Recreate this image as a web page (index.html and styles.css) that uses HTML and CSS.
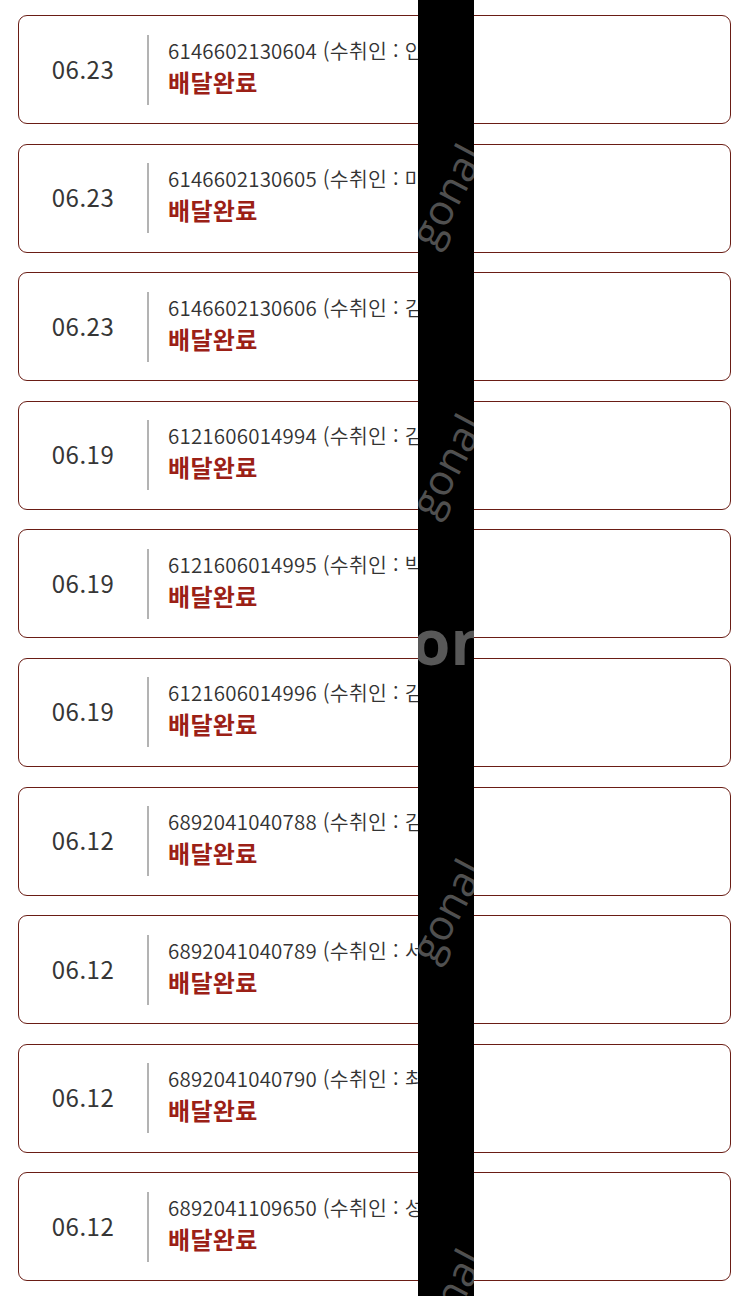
FILE: index.html
```html
<!DOCTYPE html>
<html lang="ko">
<head>
<meta charset="utf-8">
<link rel="stylesheet" href="styles.css">
</head>
<body>
<div class="list">
  <div class="card"><div class="date">06.23</div><div class="sep"></div><div class="info"><div class="track">6146602130604 (수취인 : 안</div><div class="status">배달완료</div></div></div>
  <div class="card"><div class="date">06.23</div><div class="sep"></div><div class="info"><div class="track">6146602130605 (수취인 : 마</div><div class="status">배달완료</div></div></div>
  <div class="card"><div class="date">06.23</div><div class="sep"></div><div class="info"><div class="track">6146602130606 (수취인 : 김</div><div class="status">배달완료</div></div></div>
  <div class="card"><div class="date">06.19</div><div class="sep"></div><div class="info"><div class="track">6121606014994 (수취인 : 김</div><div class="status">배달완료</div></div></div>
  <div class="card"><div class="date">06.19</div><div class="sep"></div><div class="info"><div class="track">6121606014995 (수취인 : 박</div><div class="status">배달완료</div></div></div>
  <div class="card"><div class="date">06.19</div><div class="sep"></div><div class="info"><div class="track">6121606014996 (수취인 : 김</div><div class="status">배달완료</div></div></div>
  <div class="card"><div class="date">06.12</div><div class="sep"></div><div class="info"><div class="track">6892041040788 (수취인 : 김</div><div class="status">배달완료</div></div></div>
  <div class="card"><div class="date">06.12</div><div class="sep"></div><div class="info"><div class="track">6892041040789 (수취인 : 서</div><div class="status">배달완료</div></div></div>
  <div class="card"><div class="date">06.12</div><div class="sep"></div><div class="info"><div class="track">6892041040790 (수취인 : 최</div><div class="status">배달완료</div></div></div>
  <div class="card"><div class="date">06.12</div><div class="sep"></div><div class="info"><div class="track">6892041109650 (수취인 : 성</div><div class="status">배달완료</div></div></div>
</div>
<div class="redact">
  <span class="wm wm1">gonal</span>
  <span class="wm wm2">gonal</span>
  <span class="wm wm3">gonal</span>
  <span class="wm wm4">gonal</span>
  <span class="wm-h">on</span>
</div>
</body>
</html>
```

FILE: styles.css
```css
html, body {
  margin: 0;
  padding: 0;
  background: #ffffff;
}
body {
  width: 750px;
  height: 1296px;
  overflow: hidden;
  position: relative;
  font-family: "Noto Sans CJK KR", "Noto Sans", sans-serif;
}
.list {
  padding: 15px 0 0 18px;
  display: flex;
  flex-direction: column;
  gap: 19.6px;
}
.card {
  box-sizing: border-box;
  width: 713px;
  height: 109px;
  border: 1.5px solid #6a1d15;
  border-radius: 9px;
  display: flex;
  align-items: center;
}
.date {
  width: 128px;
  text-align: center;
  font-size: 24px;
  color: #363636;
  letter-spacing: 0.5px;
  margin-top: -3px;
}
.sep {
  width: 2px;
  height: 70px;
  background: #b3b3b3;
}
.info {
  padding-left: 19px;
  display: flex;
  flex-direction: column;
  white-space: nowrap;
  margin-top: -4px;
}
.track {
  font-size: 20.5px;
  font-weight: 350;
  line-height: 28px;
  color: #333333;
  letter-spacing: 0.2px;
}
.status {
  font-size: 24px;
  line-height: 36px;
  font-weight: 700;
  color: #9b2016;
  letter-spacing: 0.3px;
}
.redact {
  position: absolute;
  left: 418px;
  top: 0;
  width: 56px;
  height: 1296px;
  background: #000000;
  overflow: hidden;
}
.wm {
  position: absolute;
  left: 28px;
  font-family: "Open Sans", "Noto Sans", sans-serif;
  font-size: 42px;
  line-height: 1;
  color: #505050;
  transform: translate(-50%, -50%) rotate(-62deg);
  white-space: nowrap;
}
.wm1 { top: 195px; }
.wm2 { top: 465px; }
.wm3 { top: 910px; }
.wm4 { top: 1300px; }
.wm-h {
  position: absolute;
  top: 610px;
  left: -6px;
  font-family: "Open Sans", "Noto Sans", sans-serif;
  font-size: 62px;
  font-weight: 700;
  line-height: 1;
  color: #585858;
  white-space: nowrap;
}
```
